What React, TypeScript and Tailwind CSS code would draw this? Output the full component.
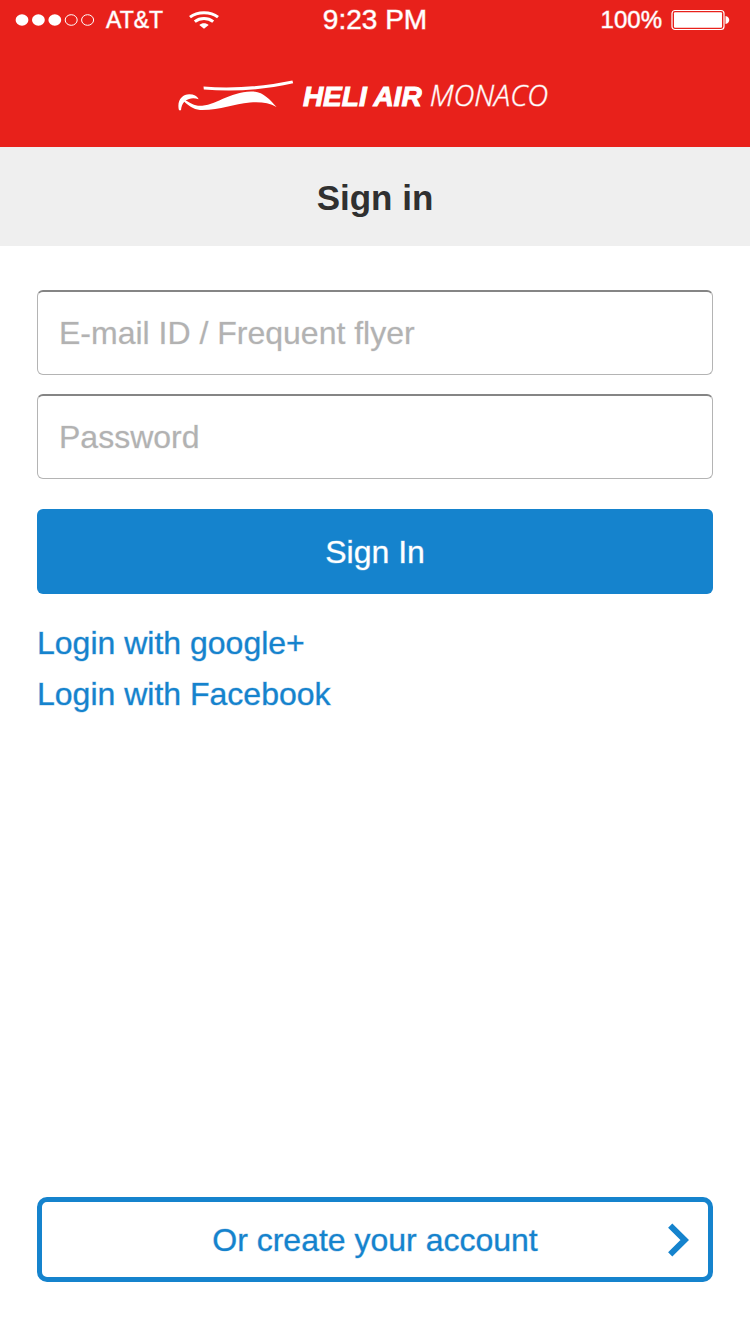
import React from "react";

function StatusBar() {
  return (
    <div className="grid h-10 grid-cols-3 items-center text-white [-webkit-text-stroke:1px_#ffffff80]">
      <div className="flex items-center pl-[15px]">
        <svg width="80" height="14" viewBox="0 0 80 14" aria-label="Signal strength">
          <g fill="#fff">
            <ellipse cx="7" cy="7" rx="6.4" ry="5.7" />
            <ellipse cx="23.4" cy="7" rx="6.4" ry="5.7" />
            <ellipse cx="39.8" cy="7" rx="6.4" ry="5.7" />
          </g>
          <g fill="none" stroke="#fff" strokeWidth="1">
            <ellipse cx="56.2" cy="7" rx="6" ry="5.3" />
            <ellipse cx="72.6" cy="7" rx="6" ry="5.3" />
          </g>
        </svg>
        <span className="ml-[11px] text-[23px] leading-10">AT&amp;T</span>
        <svg className="ml-[26px]" width="30" height="18" viewBox="0 0 30 18" aria-label="Wi-Fi">
          <g fill="none" stroke="#fff" strokeWidth="3">
            <path d="M1 6.2C8.500 .200 21.500 .200 29 6.200" />
            <path d="M5.800 10.600C11 6.400 19 6.400 24.200 10.600" />
          </g>
          <path d="M10.300 14C13 11.600 17 11.600 19.700 14L15 17.800Z" fill="#fff" />
        </svg>
      </div>
      <span className="text-center text-[28px] leading-10">9:23 PM</span>
      <div className="flex items-center justify-end pr-5">
        <span className="mr-[9px] text-[24px] leading-10">100%</span>
        <svg width="59" height="22" viewBox="0 0 59 22" aria-label="Battery full">
          <rect x="1" y="1.5" width="52" height="19" rx="3" fill="none" stroke="#fff" strokeWidth="1.2" />
          <rect x="3" y="3.200" width="48" height="15.600" rx="1" fill="#fff" />
          <path d="M54.500 7C59.500 8 59.500 14 54.500 15Z" fill="#fff" />
        </svg>
      </div>
    </div>
  );
}

function Logo() {
  return (
    <div className="flex h-[107px] items-center justify-center pt-1 pr-6 text-white">
      <svg width="116" height="34" viewBox="0 0 116 34" aria-hidden="true" fill="#fff">
        <path d="M25.500 7.600C55 10 85 7.600 114.400 1.600L115.200 4.300C86 11 55 13 25.800 10.400Z" />
        <path d="M1 31.300C-1.500 22 4 15.300 11.300 15.300C16 15.300 19 17 20.700 20.300C16 18.300 11 19 7.600 21.600C11 22.700 14 26.200 20 26.800C36 27.700 51 12.700 73 12.400C85 12.400 91 20 98.500 27.900C91 24 83 22.800 72 23.600C55 25 42 31.500 22 31C15 30.400 10.500 26.500 6.300 22.800C4.300 25 3.300 28 3 31.300Z" />
      </svg>
      <div className="ml-[9px] flex items-baseline gap-2 text-[28px] leading-8 italic">
        <span className="font-bold [-webkit-text-stroke:1px_white]">HELI AIR</span>
        <span className="font-['Open_Sans',sans-serif] text-[29px] font-light [-webkit-text-stroke:1px_#ffffff80]">
          MONACO
        </span>
      </div>
    </div>
  );
}

const fieldClass =
  "block h-[85px] w-full rounded-md border border-t-2 border-[#b4b4b4] border-t-[#858585] bg-white px-[21px] text-[32px] text-[#333] placeholder:text-[#b2b2b2] placeholder:opacity-100 [-webkit-text-stroke:1px_#b2b2b240]";

export default function App() {
  return (
    <div className="flex min-h-screen flex-col bg-white font-['Liberation_Sans',Arial,sans-serif]">
      <header className="bg-[#e8211b]">
        <StatusBar />
        <Logo />
      </header>
      <div className="bg-[#efefef] pt-7 pb-[26px]">
        <h1 className="text-center text-[35px] leading-[45px] font-bold text-[#303030]">Sign in</h1>
      </div>
      <main className="flex grow flex-col px-[37px] pt-[44px] pb-[52px]">
        <form onSubmit={(event: React.FormEvent) => event.preventDefault()}>
          <div className="flex flex-col gap-[19px]">
            <input type="text" aria-label="E-mail ID / Frequent flyer" placeholder="E-mail ID / Frequent flyer" className={fieldClass} />
            <input type="password" aria-label="Password" placeholder="Password" className={fieldClass} />
          </div>
          <button type="submit" className="mt-[30px] block h-[85px] w-full rounded-md bg-[#1583cd] text-[32px] text-white [-webkit-text-stroke:1px_#ffffff59]">
            Sign In
          </button>
        </form>
        <div className="mt-6 flex flex-col items-start text-[32px] leading-[51px] text-[#1583cd] [-webkit-text-stroke:1px_#1583cd59]">
          <a href="#google">Login with google+</a>
          <a href="#facebook">Login with Facebook</a>
        </div>
        <button type="button" className="mt-auto flex h-[85px] w-full items-center rounded-[10px] border-[5px] border-[#1583cd] bg-white pr-[19px] pl-10 text-[32px] text-[#1583cd] [-webkit-text-stroke:1px_#1583cd59]">
          <span className="grow text-center">Or create your account</span>
          <svg width="21" height="34" viewBox="0 0 21 34" aria-hidden="true">
            <path d="M2.200 2.700L16.800 17L2.200 31.300" fill="none" stroke="#1583cd" strokeWidth="6" />
          </svg>
        </button>
      </main>
    </div>
  );
}
